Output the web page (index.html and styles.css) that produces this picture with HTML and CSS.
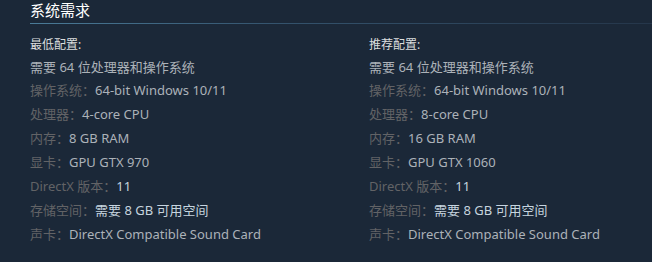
FILE: index.html
```html
<!DOCTYPE html>
<html lang="zh-CN">
<head>
<meta charset="utf-8">
<title>系统需求</title>
<link rel="stylesheet" href="styles.css">
</head>
<body>
<section class="sysreq">
  <h2 class="sysreq-title">系统需求</h2>
  <div class="sysreq-cols">
    <div class="sysreq-col">
      <div class="col-title">最低配置:</div>
      <ul class="req-list">
        <li class="req-note">需要 64 位处理器和操作系统</li>
        <li><span class="lbl">操作系统：</span>64-bit Windows 10/11</li>
        <li><span class="lbl">处理器：</span>4-core CPU</li>
        <li><span class="lbl">内存：</span>8 GB RAM</li>
        <li><span class="lbl">显卡：</span>GPU GTX 970</li>
        <li><span class="lbl">DirectX 版本：</span><span class="hi">11</span></li>
        <li><span class="lbl">存储空间：</span><span class="hi">需要 8 GB 可用空间</span></li>
        <li><span class="lbl">声卡：</span>DirectX Compatible Sound Card</li>
      </ul>
    </div>
    <div class="sysreq-col">
      <div class="col-title">推荐配置:</div>
      <ul class="req-list">
        <li class="req-note">需要 64 位处理器和操作系统</li>
        <li><span class="lbl">操作系统：</span>64-bit Windows 10/11</li>
        <li><span class="lbl">处理器：</span>8-core CPU</li>
        <li><span class="lbl">内存：</span>16 GB RAM</li>
        <li><span class="lbl">显卡：</span>GPU GTX 1060</li>
        <li><span class="lbl">DirectX 版本：</span><span class="hi">11</span></li>
        <li><span class="lbl">存储空间：</span><span class="hi">需要 8 GB 可用空间</span></li>
        <li><span class="lbl">声卡：</span>DirectX Compatible Sound Card</li>
      </ul>
    </div>
  </div>
</section>
</body>
</html>
```
FILE: styles.css
```css
html, body {
  margin: 0;
  padding: 0;
  background: #1b2838;
  height: 100%;
}
body {
  font-family: "Noto Sans", "Noto Sans CJK SC", sans-serif;
  color: #acb2b8;
}
.sysreq {
  padding-left: 30px;
}
.sysreq-title {
  margin: 0;
  font-size: 15px;
  font-weight: normal;
  color: #ffffff;
  line-height: 20px;
  padding-bottom: 3px;
  border-bottom: 1px solid transparent;
  border-image: linear-gradient(to right, #4a7b98 0%, #34536d 40%, #25364a 100%) 1;
}
.sysreq-cols {
  display: grid;
  grid-template-columns: 339px 1fr;
  margin-top: 12px;
}
.col-title {
  font-size: 12px;
  line-height: 18px;
  color: #dcdedf;
  margin-bottom: 2px;
}
.req-list {
  list-style: none;
  margin: 0;
  padding: 0;
  font-size: 13px;
  line-height: 24px;
}
.req-list .req-note {
  line-height: 22px;
}
.lbl {
  color: #626366;
}
.hi {
  color: #c6d4df;
}
```
